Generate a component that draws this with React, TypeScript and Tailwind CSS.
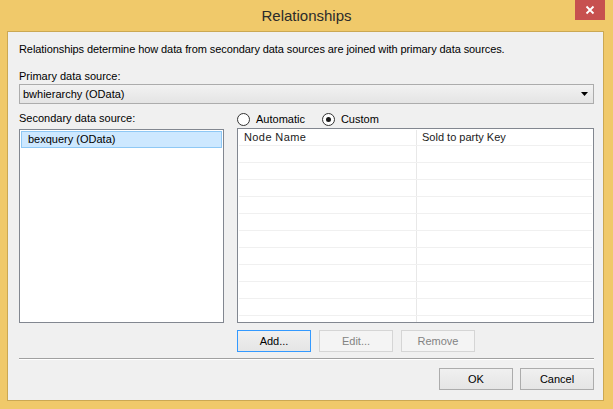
import React from "react";

const font = { fontFamily: '"Liberation Sans", Arial, sans-serif' };

function Btn({ label, disabled, focused }: { label: string; disabled?: boolean; focused?: boolean }) {
  const cls = disabled
    ? "border-[#D5D5D5] bg-[#F4F4F4] text-[#838383]"
    : focused
    ? "border-[#3399FF] bg-linear-to-b from-[#F0F0F0] to-[#E5E5E5] text-black"
    : "border-[#ACACAC] bg-linear-to-b from-[#F0F0F0] to-[#E5E5E5] text-black";
  return (
    <div className={`h-[22px] w-[74px] border flex items-center justify-center text-[11px] leading-[15px] ${cls}`}>
      {label}
    </div>
  );
}

function Radio({ checked, label }: { checked?: boolean; label: string }) {
  return (
    <div className="flex items-center gap-[6px]">
      <div className="w-[13px] h-[13px] rounded-full border border-[#333333] bg-white flex items-center justify-center">
        {checked && <div className="w-[5px] h-[5px] rounded-full bg-[#1a1a1a]" />}
      </div>
      <span>{label}</span>
    </div>
  );
}

export default function App() {
  const rows = Array.from({ length: 11 });
  return (
    <div className="w-[613px] h-[409px] bg-[#F0C96A] flex flex-col text-black text-[11px] leading-[15px] overflow-hidden" style={font}>
      <div className="h-[31px] relative flex items-center justify-center shrink-0">
        <span className="text-[15px] leading-[31px] text-[#2b2b2b]">Relationships</span>
        <div className="absolute left-[575px] top-0 w-[30px] h-[20px] bg-[#C7504F] flex items-center justify-center">
          <svg width="10" height="10" viewBox="0 0 10 10">
            <path d="M1.5 1.5 L8.5 8.5 M8.5 1.5 L1.5 8.5" stroke="white" strokeWidth="1.8" />
          </svg>
        </div>
      </div>
      <div className="ml-[7px] mr-[9px] mb-[8px] h-[370px] border border-[#CBA853] bg-[#F0F0F0] pl-[11px] pr-[9px] pt-[10px] flex flex-col">
        <div className="h-[15px] tracking-[-0.08px]">Relationships determine how data from secondary data sources are joined with primary data sources.</div>
        <div className="h-[15px] mt-[12px]">Primary data source:</div>
        <div className="h-[20px] border border-[#ACACAC] bg-linear-to-b from-[#F2F2F2] to-[#E4E4E4] flex items-center pl-[3px] pr-[5px] leading-[18px]">
          <span className="flex-1">bwhierarchy (OData)</span>
          <svg width="7" height="4" viewBox="0 0 7 4">
            <path d="M0 0 H7 L3.5 4 Z" fill="black" />
          </svg>
        </div>
        <div className="mt-[6px] flex gap-[13px] h-[213px]">
          <div className="w-[205px] flex flex-col">
            <div className="h-[19px] pt-[1px]">Secondary data source:</div>
            <div className="h-[194px] border border-[#828790] bg-white p-[1px]">
              <div className="h-[17px] border border-[#8EC8F5] bg-[#CDE8FF] pl-[6px] leading-[14px]">bexquery (OData)</div>
            </div>
          </div>
          <div className="flex-1 flex flex-col">
            <div className="h-[18px] flex items-center gap-[17px] leading-[18px]">
              <Radio label="Automatic" />
              <Radio label="Custom" checked />
            </div>
            <div className="h-[195px] border border-[#828790] bg-white overflow-hidden px-[1px]">
              <div className="h-[17px] flex border-b border-[#F0F0F0] pt-[1px] text-[#1b1b1b]">
                <div className="w-[178px] border-r border-[#E8E8E8] pl-[5px] tracking-[0.4px]">Node Name</div>
                <div className="flex-1 pl-[5px]">Sold to party Key</div>
              </div>
              {rows.map((_, i) => (
                <div key={i} className="h-[17px] flex border-b border-[#F0F0F0]">
                  <div className="w-[178px] border-r border-[#E8E8E8]" />
                  <div className="flex-1" />
                </div>
              ))}
            </div>
          </div>
        </div>
        <div className="mt-[7px] ml-[218px] flex gap-[8px]">
          <Btn label="Add..." focused />
          <Btn label="Edit..." disabled />
          <Btn label="Remove" disabled />
        </div>
        <div className="mt-[6px] border-t border-[#A0A0A0] border-b border-b-white" />
        <div className="mt-[8px] flex justify-end gap-[7px]">
          <Btn label="OK" />
          <Btn label="Cancel" />
        </div>
      </div>
    </div>
  );
}
